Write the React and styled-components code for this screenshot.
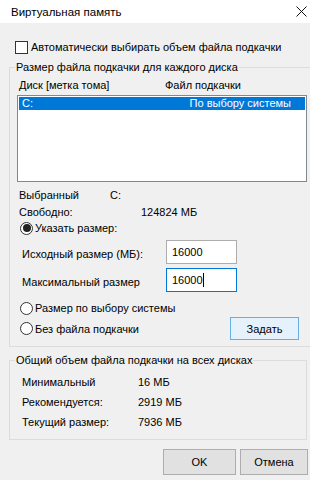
import React from "react";
import styled, { createGlobalStyle } from "styled-components";

const GlobalStyle = createGlobalStyle`
  html, body {
    margin: 0;
    padding: 0;
  }
  body {
    font-family: "Liberation Sans", Arial, sans-serif;
    font-size: 11px;
    color: #000;
  }
`;

const Window = styled.div`
  width: 310px;
  height: 480px;
  background: #f0f0f0;
  overflow: hidden;
  display: flex;
  flex-direction: column;
`;

const TitleBar = styled.div`
  height: 23px;
  flex-shrink: 0;
  background: #fff;
  display: flex;
  align-items: center;
  justify-content: space-between;
  padding: 0 2px 0 11px;
  font-size: 11.5px;
`;

const Title = styled.span`
  line-height: 16px;
`;

const CloseButton = styled.div`
  width: 14px;
  height: 23px;
  display: flex;
  align-items: center;
  justify-content: center;
`;

const Body = styled.div`
  padding: 0 0 0 9px;
  display: flex;
  flex-direction: column;
`;

const CheckRow = styled.label`
  display: flex;
  align-items: center;
  gap: 3px;
  height: 16px;
  margin: 16px 0 0 6px;
`;

const CheckBox = styled.span`
  width: 11px;
  height: 11px;
  border: 1px solid #333;
  background: #fff;
  box-sizing: content-box;
`;

const Group = styled.fieldset`
  margin: ${(p) => p.$top || 0}px 0 0 0;
  padding: 0;
  border: 1px solid #dcdcdc;
  width: ${(p) => p.$width}px;
  box-sizing: border-box;
  min-width: 0;
`;

const Legend = styled.legend`
  margin-left: 5px;
  padding: 0 1px;
  line-height: 16px;
`;

const GroupContent = styled.div`
  display: flex;
  flex-direction: column;
  padding: 0 0 ${(p) => p.$bottom}px 7px;
`;

const HeaderRow = styled.div`
  display: grid;
  grid-template-columns: 146px 1fr;
  height: 16px;
  line-height: 16px;
  margin-top: 2px;
  padding-left: 2px;
`;

const ListBox = styled.div`
  width: 290px;
  height: 87px;
  box-sizing: border-box;
  border: 1px solid #828790;
  background: #fff;
  margin-top: 2px;
  padding: 1px;
`;

const ListItem = styled.div`
  display: flex;
  justify-content: space-between;
  height: 13px;
  line-height: 13px;
  padding: 0 14px 0 3px;
  background: ${(p) => (p.$selected ? "#0078d7" : "transparent")};
  color: ${(p) => (p.$selected ? "#fff" : "#000")};
`;

const InfoRow = styled.div`
  display: grid;
  grid-template-columns: ${(p) => p.$cols};
  height: ${(p) => p.$h || 17}px;
  align-items: center;
  margin-top: ${(p) => p.$mt || 0}px;
  padding-left: ${(p) => p.$pl || 0}px;
`;

const RadioRow = styled.div`
  display: flex;
  align-items: center;
  justify-content: space-between;
  height: ${(p) => p.$h || 16}px;
  margin-top: ${(p) => p.$mt || 0}px;
  padding: 0 14px 0 3px;
`;

const RadioLabel = styled.label`
  display: flex;
  align-items: center;
  gap: 2px;
`;

const Radio = styled.span`
  width: 11px;
  height: 11px;
  border: 1px solid #333;
  border-radius: 50%;
  background: #fff;
  box-sizing: content-box;
  display: flex;
  align-items: center;
  justify-content: center;
  &::after {
    content: "";
    width: 8px;
    height: 8px;
    border-radius: 50%;
    background: ${(p) => (p.$checked ? "#222" : "transparent")};
  }
`;

const SizeRow = styled.div`
  display: grid;
  grid-template-columns: 144px 71px;
  align-items: center;
  height: 24px;
  margin-top: 4px;
  padding-left: 5px;
`;

const SizeLabel = styled.span`
  padding-top: ${(p) => p.$shift || 0}px;
`;

const TextInput = styled.div`
  height: 24px;
  box-sizing: border-box;
  border: 1px solid ${(p) => (p.$focused ? "#0078d7" : "#adadad")};
  background: #fff;
  padding: 0 0 0 5px;
  line-height: 20px;
  display: flex;
  align-items: center;
`;

const Caret = styled.span`
  width: 1px;
  height: 14px;
  background: #000;
`;

const Button = styled.button`
  font: inherit;
  color: #000;
  width: ${(p) => p.$w}px;
  height: ${(p) => p.$h}px;
  padding: 0;
  border: 1px solid ${(p) => (p.$accent ? "#66aee6" : "#adadad")};
  background: ${(p) => (p.$accent ? "#e5f1fb" : "#e1e1e1")};
  box-sizing: border-box;
`;

const Footer = styled.div`
  display: flex;
  justify-content: flex-end;
  gap: 4px;
  padding-right: 2px;
  margin-top: 9px;
`;

export default function App() {
  return (
    <>
      <GlobalStyle />
      <Window>
        <TitleBar>
          <Title>Виртуальная память</Title>
          <CloseButton>
            <svg width="11" height="11" viewBox="0 0 11 11">
              <path d="M0.5 0.5 L10.5 10.5 M10.5 0.5 L0.5 10.5" stroke="#111" strokeWidth="1" fill="none" />
            </svg>
          </CloseButton>
        </TitleBar>
        <Body>
          <CheckRow>
            <CheckBox />
            <span>Автоматически выбирать объем файла подкачки</span>
          </CheckRow>

          <Group $top={4} $width={305}>
            <Legend>Размер файла подкачки для каждого диска</Legend>
            <GroupContent $bottom={6}>
              <HeaderRow>
                <span>Диск [метка тома]</span>
                <span>Файл подкачки</span>
              </HeaderRow>
              <ListBox>
                <ListItem $selected>
                  <span>C:</span>
                  <span>По выбору системы</span>
                </ListItem>
              </ListBox>
              <InfoRow $cols="91px 1fr" $mt={4} $pl={2}>
                <span>Выбранный</span>
                <span>C:</span>
              </InfoRow>
              <InfoRow $cols="122px 1fr" $pl={2}>
                <span>Свободно:</span>
                <span>124824 МБ</span>
              </InfoRow>
              <RadioRow>
                <RadioLabel>
                  <Radio $checked />
                  <span>Указать размер:</span>
                </RadioLabel>
              </RadioRow>
              <SizeRow>
                <SizeLabel $shift={3}>Исходный размер (МБ):</SizeLabel>
                <TextInput>16000</TextInput>
              </SizeRow>
              <SizeRow>
                <SizeLabel $shift={3}>Максимальный размер</SizeLabel>
                <TextInput $focused>
                  16000
                  <Caret />
                </TextInput>
              </SizeRow>
              <RadioRow $mt={8}>
                <RadioLabel>
                  <Radio />
                  <span>Размер по выбору системы</span>
                </RadioLabel>
              </RadioRow>
              <RadioRow $h={23} $mt={1}>
                <RadioLabel>
                  <Radio />
                  <span>Без файла подкачки</span>
                </RadioLabel>
                <Button $w={69} $h={23} $accent>
                  Задать
                </Button>
              </RadioRow>
            </GroupContent>
          </Group>

          <Group $top={5} $width={298}>
            <Legend>Общий объем файла подкачки на всех дисках</Legend>
            <GroupContent $bottom={7}>
              <InfoRow $cols="116px 1fr" $h={20} $mt={4} $pl={5}>
                <span>Минимальный</span>
                <span>16 МБ</span>
              </InfoRow>
              <InfoRow $cols="116px 1fr" $h={20} $pl={5}>
                <span>Рекомендуется:</span>
                <span>2919 МБ</span>
              </InfoRow>
              <InfoRow $cols="116px 1fr" $h={20} $pl={5}>
                <span>Текущий размер:</span>
                <span>7936 МБ</span>
              </InfoRow>
            </GroupContent>
          </Group>

          <Footer>
            <Button $w={73} $h={26}>
              OK
            </Button>
            <Button $w={68} $h={26}>
              Отмена
            </Button>
          </Footer>
        </Body>
      </Window>
    </>
  );
}
